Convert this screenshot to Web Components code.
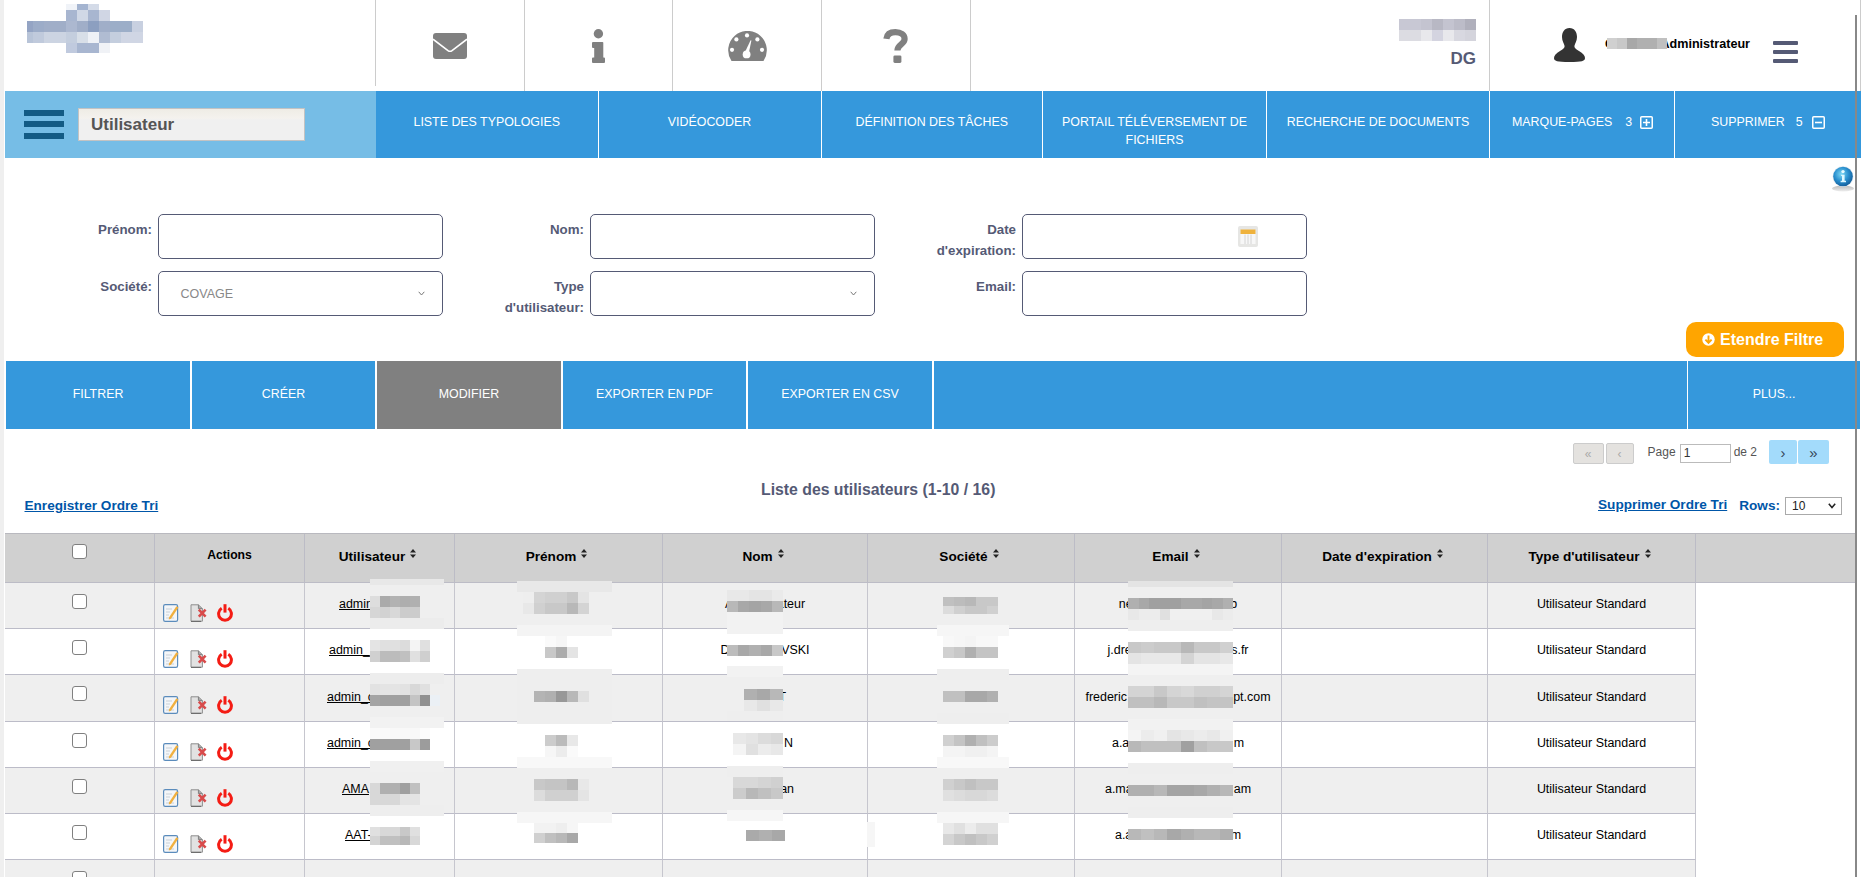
<!DOCTYPE html>
<html lang="fr"><head><meta charset="utf-8"><title>Utilisateur</title>
<style>
html,body{margin:0;padding:0;width:1861px;height:877px;overflow:hidden;background:#fff;font-family:"Liberation Sans",Arial,sans-serif}
</style></head><body>
<app-page>
  <top-header></top-header>
  <main-nav></main-nav>
  <filter-panel></filter-panel>
  <action-bar></action-bar>
  <pager-bar></pager-bar>
  <list-tools></list-tools>
  <data-table></data-table>
  <blur-layer></blur-layer>
</app-page>
<script>
const FONT='"Liberation Sans",Arial,sans-serif';
function def(name,render){customElements.define(name,class extends HTMLElement{connectedCallback(){if(this.shadowRoot)return;this.attachShadow({mode:'open'}).innerHTML=render(this);}});}

const ICONS={
 mail:`<svg width="34" height="26" viewBox="0 0 34 26"><rect width="34" height="26" rx="3" fill="#808080"/><path d="M0 6.2 L15 17.6 Q17 19 19 17.6 L34 6.2" fill="none" stroke="#fff" stroke-width="1.6"/></svg>`,
 info:`<svg width="13" height="34" viewBox="0 0 13 34"><circle cx="6.4" cy="4.7" r="4.7" fill="#808080"/><path d="M1 13H10.5Q11.3 13 11.3 13.8V28.5H12Q13 28.5 13 29.5V33Q13 34 12 34H1Q0 34 0 33V29.5Q0 28.5 1 28.5H2.2V19H1Q0 19 0 18V14Q0 13 1 13Z" fill="#808080"/></svg>`,
 gauge:`<svg width="39" height="30" viewBox="0 0 39 30"><path d="M3.5 30 A19.3 19.3 0 1 1 35.5 30 Z" fill="#808080"/><g fill="#fff"><circle cx="19" cy="4.4" r="2.1"/><circle cx="8.4" cy="8.4" r="2.1"/><circle cx="29.4" cy="8.4" r="2.1"/><circle cx="4" cy="18.8" r="2.1"/><circle cx="34" cy="18.8" r="2.1"/><circle cx="18.6" cy="23.4" r="3.9"/><path d="M16.8 21.5 L22.6 9.2 L23.4 9.5 L20.4 24 Z"/></g></svg>`,
 help:`<svg width="25" height="34" viewBox="0 0 25 34"><path d="M3.4 9.8C4 5 7.4 3.2 12.4 3.2 C18 3.2 21.6 6 21.6 10 C21.6 15.2 14.4 15.6 14.4 21.4" fill="none" stroke="#808080" stroke-width="6.2"/><rect x="10.4" y="26.4" width="8" height="7.6" rx="1.4" fill="#808080"/></svg>`,
 person:`<svg width="31" height="34" viewBox="0 0 31 34"><path d="M15.5 0C10.5 0 8 4 8 9 C8 13 10 15.5 10.6 18 C10.9 20 9 21 6 23 C2 25.5 0 27.5 0 30 C0 33 3 34 15.5 34 C28 34 31 33 31 30 C31 27.5 29 25.5 25 23 C22 21 20.1 20 20.4 18 C21 15.5 23 13 23 9 C23 4 20.5 0 15.5 0Z" fill="#333"/></svg>`,
 burgerDark:`<svg width="40" height="29" viewBox="0 0 40 29"><g fill="#135b85"><rect width="40" height="6"/><rect y="11" width="40" height="6"/><rect y="23" width="40" height="6"/></g></svg>`,
 burgerSlate:`<svg width="25" height="22" viewBox="0 0 25 22"><g fill="#555a75"><rect width="25" height="4" rx="1"/><rect y="9" width="25" height="4" rx="1"/><rect y="18" width="25" height="4" rx="1"/></g></svg>`,
 plus:`<svg width="13" height="13" viewBox="0 0 13 13"><rect x=".75" y=".75" width="11.5" height="11.5" rx="1" fill="none" stroke="#fff" stroke-width="1.5"/><path d="M3 6.5H10M6.5 3V10" stroke="#fff" stroke-width="1.6"/></svg>`,
 minus:`<svg width="13" height="13" viewBox="0 0 13 13"><rect x=".75" y=".75" width="11.5" height="11.5" rx="1" fill="none" stroke="#fff" stroke-width="1.5"/><path d="M3 6.5H10" stroke="#fff" stroke-width="1.6"/></svg>`,
 chev:`<svg width="7" height="5" viewBox="0 0 7 5"><path d="M.7.8 L3.5 4 L6.3.8" fill="none" stroke="#777" stroke-width="1"/></svg>`,
 chevD:`<svg width="8" height="6" viewBox="0 0 8 6"><path d="M.8.8 L4 4.6 L7.2.8" fill="none" stroke="#222" stroke-width="1.5"/></svg>`,
 cal:`<svg width="20" height="21" viewBox="0 0 20 21"><rect width="20" height="21" rx="2" fill="#e6e6e4"/><rect x="2.5" y="4" width="15" height="14" fill="#f7f7f7"/><rect x="2.5" y="3.5" width="15" height="4.5" fill="#efb23c"/><path d="M7 8.5V18M10 8.5V18M13 8.5V18" stroke="#d4d4d4"/></svg>`,
 globe:`<svg width="22" height="27" viewBox="0 0 22 27"><defs><radialGradient id="g" cx=".42" cy=".38" r=".72"><stop offset="0" stop-color="#7fd8f4"/><stop offset=".5" stop-color="#2a90cf"/><stop offset="1" stop-color="#0c4f8c"/></radialGradient><linearGradient id="s" x1="0" y1="0" x2="0" y2="1"><stop offset="0" stop-color="#bbb"/><stop offset="1" stop-color="#eee"/></linearGradient></defs><ellipse cx="11" cy="23.5" rx="11" ry="3" fill="url(#s)"/><circle cx="11" cy="11.5" r="10.5" fill="#e8eef2"/><circle cx="11" cy="11.5" r="9.8" fill="url(#g)"/><circle cx="11" cy="6.6" r="1.7" fill="#e8fbff"/><path d="M9.2 9.8H12.6V15.8H14V17.2H8.6V15.8H10V11.1H9.2Z" fill="#dff8ff"/></svg>`,
 expand:`<svg width="13" height="13" viewBox="0 0 13 13"><circle cx="6.5" cy="6.5" r="6.2" fill="#fff"/><path d="M6.5 2.6V9.6M3.4 6.6L6.5 9.8L9.6 6.6" fill="none" stroke="#ffa500" stroke-width="1.9"/></svg>`,
 sort:`<svg width="6" height="9" viewBox="0 0 6 9"><path d="M3 0L6 3.4H0ZM3 9L0 5.6H6Z" fill="#222"/></svg>`,
 edit:`<svg width="16" height="18" viewBox="0 0 16 18"><rect x=".6" y=".6" width="14" height="16.8" rx="1.6" fill="#f4f6f8" stroke="#5b8cbc" stroke-width="1.2"/><path d="M3 5H9M3 8H7M3 11H6M3 14H11" stroke="#c8d0d8"/><path d="M6 13.5L13.4 2.2L15.4 3.6L8 14.8L5.8 15.5Z" fill="#f0b040"/></svg>`,
 del:`<svg width="17" height="18" viewBox="0 0 17 18"><path d="M1 .8H8.4L12.4 4.6V17.2H1Z" fill="#e2e2e2" stroke="#8e8e8e"/><path d="M8.4.8V4.6H12.4" fill="#aaa" stroke="#808080"/><path d="M1 17.4H11" stroke="#666"/><path d="M8.8 5.6L15.6 12.6M15.6 5.6L8.8 12.6" stroke="#d84b4b" stroke-width="2.6"/></svg>`,
 power:`<svg width="16" height="18" viewBox="0 0 16 18"><path d="M4.7 4.3A6.4 6.4 0 1 0 11.3 4.3" fill="none" stroke="#f41c14" stroke-width="3"/><path d="M8 .2V8.6" stroke="#f41c14" stroke-width="3"/></svg>`
};
def('ui-icon',el=>`<style>:host{display:inline-flex;line-height:0}</style>${ICONS[el.getAttribute('name')]}`);

def('app-page',()=>`<style>:host{display:block;position:relative;width:1861px;height:877px;overflow:hidden;background:#fff;font-family:${FONT}}
.strip{position:absolute;left:0;top:0;bottom:0;width:4px;background:#efefef}
main{padding-left:5px;width:1856px;box-sizing:border-box}</style>
<main><slot></slot></main><div class="strip"></div>`);

def('top-header',()=>`<style>:host{display:flex;height:91px;width:1851px}
.logo{width:370px;height:86px;border-right:1px solid #ccc}
.cell{width:147.7px;height:91px;border-right:1px solid #ccc;display:flex;align-items:center;justify-content:center;box-sizing:content-box}
.sp{flex:1;display:flex;flex-direction:column;align-items:flex-end;padding:51px 13px 0 0;box-sizing:border-box}
.dg{font:bold 17px/16px ${FONT};color:#555a75}
.user{width:367px;border-left:1px solid #ccc;height:91px;display:flex;align-items:flex-start;box-sizing:border-box;position:relative}
.who{margin:37px 0 0 20px;width:145px;display:flex;justify-content:space-between;font:bold 12.6px/14px ${FONT};color:#000}
.p{margin:28px 0 0 64px}.b{margin:41px 0 0 23px}
</style>
<div class="logo"></div>
<div class="cell"><ui-icon name="mail"></ui-icon></div>
<div class="cell"><ui-icon name="info"></ui-icon></div>
<div class="cell"><ui-icon name="gauge"></ui-icon></div>
<div class="cell"><ui-icon name="help"></ui-icon></div>
<div class="sp"><span class="dg">DG</span></div>
<div class="user"><ui-icon class="p" name="person"></ui-icon><span class="who"><span>C</span><span>Administrateur</span></span><ui-icon class="b" name="burgerSlate"></ui-icon></div>`);

def('main-nav',()=>{
 const items=[['LISTE DES TYPOLOGIES',222.5],['VIDÉOCODER',223],['DÉFINITION DES TÂCHES',221.5],['<span style="letter-spacing:.08px">PORTAIL TÉLÉVERSEMENT DE</span> FICHIERS',224],['RECHERCHE DE DOCUMENTS',223]];
 return `<style>:host{display:flex;height:67px;width:1856px;background:#3598dc}
.side{width:371px;background:#76bde6;display:flex;align-items:center;padding-left:19px;box-sizing:border-box;flex:none}
.search{margin-left:14px;width:227px;height:33px;box-sizing:border-box;border:1px solid #c3c3c3;background:linear-gradient(#efece5,#f4f2ee 30%,#f0f0f0 35%);font:bold 17px/31px ${FONT};color:#555;padding-left:12px}
.it{flex:none;display:flex;align-items:flex-start;justify-content:center;text-align:center;color:#fff;font:12.4px/18px ${FONT};border-right:1px solid #fff;box-sizing:border-box;padding:22px 14px 0}
.it span{white-space:nowrap}
.f{justify-content:flex-start;padding:22px 0 0}
.f ui-icon{margin-top:2.5px}
</style><div class="side"><ui-icon name="burgerDark"></ui-icon><div class="search">Utilisateur</div></div>
${items.map(([t,w])=>`<div class="it" style="width:${w}px"><div>${t}</div></div>`).join('')}
<div class="it f" style="width:185px;padding-left:22px"><span>MARQUE-PAGES</span><span style="margin-left:13px">3</span><ui-icon name="plus" style="margin-left:8px"></ui-icon></div>
<div class="it f" style="width:186px;padding-left:36px;border:0"><span>SUPPRIMER</span><span style="margin-left:11px">5</span><ui-icon name="minus" style="margin-left:9px"></ui-icon></div>`});

def('form-field',el=>`<style>:host{display:flex;gap:6px;width:432px;height:45px}
label{width:100px;margin-left:41px;flex:none;text-align:right;font:bold 13.3px/21px ${FONT};color:#555a75;padding-top:5px;box-sizing:border-box}
.box{width:285px;height:45px;box-sizing:border-box;border:1.5px solid #555a75;border-radius:5px;background:#fff;position:relative;display:flex;align-items:center;padding:0 17px 0 21.5px;justify-content:space-between;font:12.5px ${FONT};color:#888}
</style><label>${el.getAttribute('label')}</label><div class="box"><slot></slot></div>`);

def('filter-panel',()=>`<style>:host{display:block;height:203px;width:1851px;box-sizing:border-box;padding-top:56px;position:relative}
.g{display:grid;grid-template-columns:repeat(3,432px);row-gap:12px;padding-left:6px}
.v{flex:1}.cal{margin-right:31px;display:flex}
.row{display:flex;justify-content:flex-end;padding:6px 12px 0 0}
.btn{width:158px;height:35px;border-radius:10px;background:#ffa500;color:#fff;display:flex;align-items:center;gap:5px;padding-left:16px;box-sizing:border-box;font:bold 16px ${FONT}}
.globe{position:absolute;left:1827px;top:7px}
.chev{display:flex}
</style>
<ui-icon class="globe" name="globe"></ui-icon>
<div class="g">
 <form-field label="Prénom:"></form-field>
 <form-field label="Nom:"></form-field>
 <form-field label="Date d'expiration:"><span class="v"></span><span class="cal"><ui-icon name="cal"></ui-icon></span></form-field>
 <form-field label="Société:"><span class="v">COVAGE</span><span class="chev"><ui-icon name="chev"></ui-icon></span></form-field>
 <form-field label="Type d'utilisateur:"><span class="v"></span><span class="chev"><ui-icon name="chev"></ui-icon></span></form-field>
 <form-field label="Email:"></form-field>
</div>
<div class="row"><div class="btn"><ui-icon name="expand"></ui-icon><span>Etendre Filtre</span></div></div>`);

def('action-bar',()=>{
 const b=[['FILTRER',184],['CRÉER',183],['MODIFIER',184,1],['EXPORTER EN PDF',183],['EXPORTER EN CSV',184],['',753],['PLUS...',172]];
 return `<style>:host{display:flex;gap:2px;height:68px;width:1855px;padding-left:1px;box-sizing:border-box}
div{flex:none;display:flex;align-items:center;justify-content:center;background:#3598dc;color:#fff;font:12.4px ${FONT};padding-bottom:2px;box-sizing:border-box}
.g{background:#808080}
div:last-child{margin-left:-1px}
</style>${b.map(([t,w,g])=>`<div class="${g?'g':''}" style="width:${w}px">${t}</div>`).join('')}`});

def('pager-bar',()=>`<style>:host{display:flex;justify-content:flex-end;align-items:flex-start;height:35px;box-sizing:border-box;padding:11px 27px 0 0;width:1851px;font:12px ${FONT};color:#555}
.o{height:21px;margin-top:3px;box-sizing:border-box;border:1px solid #ccc;border-radius:2px;background:#e4e2df;color:#aaa;display:flex;align-items:center;justify-content:center;font-size:12px;line-height:1}
.b{height:24px;background:#a3dbfb;color:#345;border-radius:2px;display:flex;align-items:center;justify-content:center;font-size:15px}
.t{line-height:24px}
.i{width:51px;height:19px;margin:4px 3px 0 4px;box-sizing:border-box;border:1px solid #bbb;background:#fff;color:#333;font:12px/17px ${FONT};padding-left:3px}
</style><div class="o" style="width:31px">«</div><div class="o" style="width:28px;margin-left:2px">‹</div>
<div class="t" style="margin-left:14px">Page</div><div class="i">1</div><div class="t">de 2</div>
<div class="b" style="width:28px;margin-left:12px">›</div><div class="b" style="width:31px;margin-left:1px">»</div>`);

def('list-tools',()=>`<style>:host{display:flex;height:69px;width:1851px;box-sizing:border-box;position:relative;font:bold 13.6px ${FONT}}
.l{width:756px;padding:34px 0 0 19.5px;box-sizing:border-box;flex:none}
a{color:#0056a8;text-decoration:underline;line-height:16px}
.t{padding-top:18px;font:bold 15.8px/16px ${FONT};color:#555a75;white-space:nowrap}
.r{margin-left:auto;display:flex;align-items:flex-start;padding:33px 14px 0 0;line-height:18px}
.rows{color:#0056a8;margin:0 5px 0 12px}
.s{width:57px;height:18px;box-sizing:border-box;border:1px solid #aaa;font:12px/16px ${FONT};color:#222;padding:0 5px 0 6px;display:flex;justify-content:space-between;align-items:center}
</style><div class="l"><a>Enregistrer Ordre Tri</a></div><div class="t">Liste des utilisateurs (1-10 / 16)</div>
<div class="r"><a>Supprimer Ordre Tri</a><span class="rows">Rows:</span><span class="s">10<ui-icon name="chevD"></ui-icon></span></div>`);

def('split-text',el=>`<style>:host{display:flex;justify-content:space-between;width:${el.getAttribute('w')}px;white-space:nowrap}</style><span>${el.getAttribute('a')||''}</span><span>${el.getAttribute('b')||''}</span>`);

def('check-box',()=>`<style>:host{display:block;width:15px;height:15px;box-sizing:border-box;border:1px solid #808080;border-radius:3px;background:#fff}</style>`);

def('data-table',()=>{
 const cols=[150,150,150,208,205,207,207,206,208,160];
 const tpl=cols.map(c=>c+'px').join(' ');
 const heads=['Utilisateur','Prénom','Nom','Société','Email',"Date d'expiration","Type d'utilisateur"];
 const rows=[
  {u:['admin',81],n:['Administrateur',0],e:['ne','b',118.5],h:46},
  {u:['admin_',101],n:['D','VSKI',89],e:['j.dre','s.fr',141],h:46},
  {u:['admin_c',105],n:['','T',42],e:['frederic','pt.com',185],h:47},
  {u:['admin_c',105],n:['','N',56],e:['a.a','m',132],h:46},
  {u:['AMA',75],n:['','an',58],e:['a.ma','am',146],h:46},
  {u:['AAT-',69],n:['','',10],e:['a.a','m',126],h:46}];
 const icons=`<div class="ic"><ui-icon name="edit"></ui-icon><ui-icon name="del"></ui-icon><ui-icon name="power"></ui-icon></div>`;
 const row=(r,i)=>`<div class="r ${i%2?'ev':'od'}" style="height:${r.h}px">
  <div class="c ck"><check-box></check-box></div><div class="c">${icons}</div>
  <div class="c"><split-text style="text-decoration:underline" w="${r.u[1]}" a="${r.u[0]}"></split-text></div><div class="c"></div>
  <div class="c">${r.n[1]===0?r.n[0]:`<split-text w="${r.n[2]}" a="${r.n[0]}" b="${r.n[1]}"></split-text>`}</div><div class="c"></div>
  <div class="c"><split-text w="${r.e[2]}" a="${r.e[0]}" b="${r.e[1]}"></split-text></div><div class="c"></div>
  <div class="c">Utilisateur Standard</div><div class="n"></div></div>`;
 return `<style>:host{display:block;width:1851px}
.r,.h{display:grid;grid-template-columns:${tpl};box-sizing:border-box}
.h{height:50px;background:#d0d0d0;border-top:1px solid #b9b9bf;border-bottom:1px solid #bcbcc6}
.hc{border-right:1px solid #bcbcc6;display:flex;align-items:center;justify-content:center;gap:5px;font:bold 13.6px ${FONT};color:#000;padding:0 4px 3px 0;box-sizing:border-box}
.hc.a{font-size:12.2px;padding:0 0 7px}.hc.k{padding:0 0 13px}
.hc:last-child{border-right:0}
.hc ui-icon{margin-top:-7px}
.r{font:12.45px ${FONT};color:#000}
.c{border-right:1px solid #c6c6ce;border-bottom:1.5px solid #bcbcc8;display:flex;align-items:center;justify-content:center;box-sizing:border-box;white-space:nowrap;padding-bottom:3px}
.od .c{background:#efefef}.ev .c{background:#fff}
.c.ck{align-items:flex-start;padding-top:11px}
.ic{display:flex;align-self:flex-start;justify-content:flex-start;width:100%;box-sizing:border-box;padding:21px 0 0 8px;gap:10.5px}
.n{background:#fff}
</style><div class="h"><div class="hc k"><check-box></check-box></div><div class="hc a">Actions</div>
${heads.map(t=>`<div class="hc"><span>${t}</span><ui-icon name="sort"></ui-icon></div>`).join('')}<div class="hc"></div></div>
${rows.map(row).join('')}
<div class="r od" style="height:46px"><div class="c ck"><check-box></check-box></div>${'<div class="c"></div>'.repeat(8)}<div class="n"></div></div>`});

def('blur-patch',el=>{
 const x=+el.getAttribute('x'),y=+el.getAttribute('y'),cw=+el.getAttribute('cw'),ch=+el.getAttribute('ch');
 const rows=el.getAttribute('d').split('|').map(r=>r.trim().split(/\s+/));
 const col=t=>t=='--'?'transparent':t.length==2?'#'+t+t+t:'#'+t;
 return `<style>:host{position:absolute;left:${x}px;top:${y}px;display:grid;grid-template-columns:repeat(${rows[0].length},${cw}px);grid-auto-rows:${ch}px}</style>`+
 rows.flat().map(t=>`<div style="background:${col(t)}"></div>`).join('');
});
def('blur-layer',()=>{
 const P=[
 // logo
 [33,4,11,6,'-- -- -- f0f3f8 a4b4d0 d4dbe8 -- -- -- --'],
 [33,10,11,11,'-- -- -- a8b6d0 d0d8e6 a8b6d0 d0d6e4 -- -- --|9cacc8 a0aec8 a0aec8 acb8d0 a0aec8 8c9fc0 a0aec8 9caec8 9caec8 c8d0e0|c0cadc ccd4e2 ccd4e2 c4cede d8dfe8 eef1f6 b0bcd2 c4cede d0d6e4 d0d6e4'],
 [33,43,11,10,'-- -- -- c0cade a8b6d0 a8b6d0 f0f2f6 -- -- --'],
 [27,21,6,11,'94a4c4|b8c4d8'],
 // company
 [1399,19,11,11,'c8c8d4 c8c8d4 c4c4d0 b8b8c4 c4c4d0 bcbcc8 b0b0bc|dcdce2 dcdce2 e8e8ec d4d4e0 e8e8ec d8d8e0 d4d4dc'],
 // user name
 [1607,38,10,11,'d0 c8 a8 b0 b0 c0'],
 // Utilisateur col
 [370,579,74,6,'e8'],[370,596,10,11,'dd aa b2 ae b0|d6 d2 d8 cc cc'],[370,618,74,11,'ec'],
 [370,640,10,11,'e4 e0 e0 dc f4 e0|d0 bc bc c0 e0 cf'],
 [370,673,74,11,'ed'],[370,684,10,11,'e2 e4 e4 e2 d8 e0|a4 a0 a0 a0 c4 90'],[430,695,10,11,'ebf0f5'],[370,717,74,11,'f2'],
 [370,728,10,11,'fa fa f8 f8 f8 fc|a0 a0 a0 a0 c8 9c'],[370,761,74,11,'f0'],
 [370,783,10,11,'d8 b0 b0 a0 c0|d8 d8 d8 e4 e4'],[370,805,74,11,'ee'],
 [370,827,10,9,'e0 d8 d8 c8 e0|d4 c0 c0 b8 d8'],
 // Prenom col
 [517,581,95,11,'e8'],[523,592,11,11,'ee d4 d0 d0 c8 e4|e8 d0 c8 c8 b8 d4'],[517,625,95,11,'f4'],
 [545,636,11,11,'fa f6 ff|c8 ac e4'],
 [517,669,95,55,'ee'],[534,691,11,11,'b4 b0 98 b8 e0'],
 [545,735,11,11,'cc bb e8|f6 ec fa'],[517,757,95,11,'f8'],
 [534,779,11,11,'c8 c4 c4 b8 e8|dc d0 d0 d0 e4'],[517,812,95,11,'f6'],
 [534,823,11,10,'f2 f2 ee f6|d0 c0 b8 a8'],
 // Nom col
 [727,590,11.2,11,'e8 e8 e4 e4 ea|b8 a8 a4 a8 b8'],[727,612,56,22,'f2'],
 [727,645,11.2,11,'bc a8 b0 a8 c8'],[727,666,56,11,'f2'],
 [744,689,13,11,'b0 a8 b8|e8 e0 e8'],[727,711,56,10,'ee'],
 [733,733,12.5,11,'e8 e4 dc d8|f4 e0 ec e8'],
 [727,766,56,11,'ee'],[733,777,12.5,11,'d8 d8 d4 d0|cc b8 c0 c8'],[727,810,56,11,'f6'],
 [746,830,13,11,'aa b0 a8'],[867,822,8,25,'f6'],
 // Societe
 [943,597,11,8.5,'c0 bc b8 c8 c8|dc d0 c8 c8 d0'],
 [937,625,72,11,'f6'],[943,636,11,11,'f8 f6 f4 f8 f8|d0 c8 b0 c4 c4'],
 [937,669,72,11,'ee'],[943,691,11,11,'c0 c0 a8 a8 b0'],[937,713,72,11,'ee'],
 [943,735,11,11,'d0 c4 b0 c0 cc|f4 f4 f0 f0 f4'],[937,757,72,11,'f8'],
 [943,779,11,11,'d0 c8 c0 c8 c8|e0 dc d8 d8 dc'],
 [937,812,72,11,'f6'],[943,823,11,11,'e8 e0 ec e0 e0|d4 c8 c0 c8 d0'],
 // Email
 [1128,581,105,6,'e4'],[1128,598,10.5,11,'b0 a8 a0 a0 a0 a8 a8 a4 a8 b0|e8 ec ec e0 f0 f0 f0 f0 e8 ec'],[1128,620,105,11,'ee'],
 [1128,642,13.125,11,'c8 cc c8 c8 b8 c8 c8 d0|e4 e8 e8 e8 d4 e4 e4 e8'],[1128,664,105,11,'f4'],
 [1128,686,13.125,11,'d4 d4 c8 d4 d8 d0 d0 d4|c0 c0 b8 c8 c8 c0 c4 c4'],[1128,719,105,11,'f2'],
 [1128,730,13.125,11,'f4 ec f0 e4 e8 ec e8 f0|b8 c0 c0 c0 a0 c0 c8 c8'],
 [1128,763,105,11,'ee'],[1128,785,13.125,11,'b0 b0 b8 a4 a4 a8 b0 b8'],[1128,807,105,11,'ee'],
 [1128,829,13.125,11,'b8 c0 b8 a8 b0 b8 b8 b0'],
 ];
 return `<style>:host{position:absolute;left:0;top:0;width:1861px;height:877px;pointer-events:none}
.edge{position:absolute;left:1855px;top:15px;bottom:0;width:2px;background:#888}
.rim{position:absolute;left:1860px;top:0;height:91px;width:1px;background:#ccc}</style>
<div class="edge"></div><div class="rim"></div>`+P.map(p=>`<blur-patch x="${p[0]}" y="${p[1]}" cw="${p[2]}" ch="${p[3]}" d="${p[4]}"></blur-patch>`).join('');
});
</script>
</body></html>
